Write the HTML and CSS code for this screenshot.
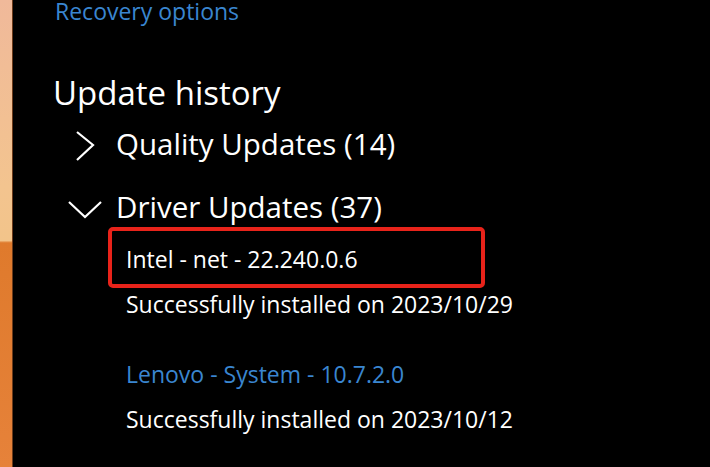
FILE: index.html
```html
<!DOCTYPE html>
<html lang="en">
<head>
<meta charset="utf-8">
<title>Update history</title>
<link rel="stylesheet" href="styles.css">
</head>
<body>
<div class="screen">
  <div class="wallpaper"></div>
  <main class="panel">
    <a class="link recovery" href="#">Recovery options</a>
    <h2 class="heading">Update history</h2>
    <div class="group">
      <svg class="chev" viewBox="0 0 40 40" width="40" height="40"><polyline points="11,8 27,21 11,36" /></svg>
      <span class="group-title">Quality Updates (14)</span>
    </div>
    <div class="group group-open">
      <svg class="chev" viewBox="0 0 40 40" width="40" height="40"><polyline points="3,15 19,30 35,15" /></svg>
      <span class="group-title">Driver Updates (37)</span>
    </div>
    <ul class="items">
      <li class="item">
        <span class="item-title highlighted">Intel - net - 22.240.0.6</span>
        <span class="status">Successfully installed on 2023/10/29</span>
      </li>
      <li class="item">
        <a class="item-title link" href="#">Lenovo - System - 10.7.2.0</a>
        <span class="status">Successfully installed on 2023/10/12</span>
      </li>
    </ul>
  </main>
</div>
</body>
</html>
```
FILE: styles.css
```css
html, body {
  margin: 0;
  padding: 0;
  background: #000;
  height: 100%;
  overflow: hidden;
}
.screen {
  display: flex;
  height: 467px;
  font-family: "Open Sans", "Noto Sans", sans-serif;
  color: #fff;
}
.wallpaper {
  width: 12px;
  flex: none;
  background: linear-gradient(180deg, #f0b99a 0%, #f3c48f 40%, #f2c48a 51.5%, #df7a2c 52%, #e6823a 100%);
  border-right: 1px solid #6b3a1a;
}
.panel {
  flex: 1;
  padding-left: 40px;
  display: flex;
  flex-direction: column;
  align-items: flex-start;
}
.link {
  color: #3a86d0;
  text-decoration: none;
}
.recovery {
  font-size: 23px;
  line-height: 20px;
  padding-top: 1px;
  margin-left: 2px;
}
.heading {
  font-size: 33px;
  line-height: 44px;
  font-weight: 400;
  margin: 50px 0 9px;
}
.group {
  display: flex;
  align-items: center;
  gap: 10px;
  height: 40px;
  padding-left: 13px;
}
.group + .group {
  margin-top: 23px;
}
.chev {
  flex: none;
  fill: none;
  stroke: #fff;
  stroke-width: 2.2;
}
.group-title {
  font-size: 29.5px;
  line-height: 40px;
}
.items {
  list-style: none;
  margin: 17px 0 0;
  padding: 0 0 0 73px;
  display: flex;
  flex-direction: column;
  gap: 40px;
}
.item {
  display: flex;
  flex-direction: column;
  align-items: flex-start;
  gap: 15px;
  font-size: 23px;
  line-height: 30px;
}
.highlighted {
  position: relative;
}
.highlighted::after {
  content: "";
  position: absolute;
  left: -18px;
  top: -17px;
  width: 377px;
  height: 61px;
  box-sizing: border-box;
  border: 4px solid #e8231a;
  border-radius: 5px;
}
```
